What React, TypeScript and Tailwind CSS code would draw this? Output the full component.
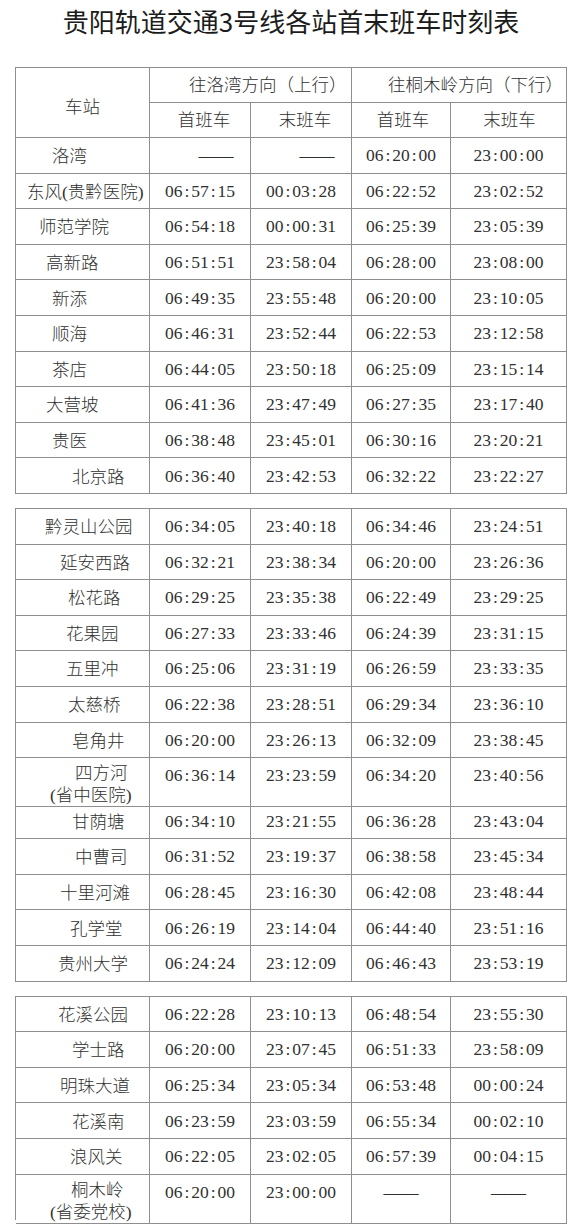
import React from "react";

type Row = {
  name: string;
  sub?: string;
  pl: string;
  subPl?: string;
  t: [string, string, string, string];
};

const g1: Row[] = [
  { name: "洛湾", pl: "pl-[36px]", t: ["——", "——", "06:20:00", "23:00:00"] },
  { name: "东风(贵黔医院)", pl: "pl-[11px]", t: ["06:57:15", "00:03:28", "06:22:52", "23:02:52"] },
  { name: "师范学院", pl: "pl-[23px]", t: ["06:54:18", "00:00:31", "06:25:39", "23:05:39"] },
  { name: "高新路", pl: "pl-[30px]", t: ["06:51:51", "23:58:04", "06:28:00", "23:08:00"] },
  { name: "新添", pl: "pl-[36px]", t: ["06:49:35", "23:55:48", "06:20:00", "23:10:05"] },
  { name: "顺海", pl: "pl-[36px]", t: ["06:46:31", "23:52:44", "06:22:53", "23:12:58"] },
  { name: "茶店", pl: "pl-[36px]", t: ["06:44:05", "23:50:18", "06:25:09", "23:15:14"] },
  { name: "大营坡", pl: "pl-[30px]", t: ["06:41:36", "23:47:49", "06:27:35", "23:17:40"] },
  { name: "贵医", pl: "pl-[36px]", t: ["06:38:48", "23:45:01", "06:30:16", "23:20:21"] },
  { name: "北京路", pl: "pl-[56px]", t: ["06:36:40", "23:42:53", "06:32:22", "23:22:27"] },
];

const g2: Row[] = [
  { name: "黔灵山公园", pl: "pl-[29px]", t: ["06:34:05", "23:40:18", "06:34:46", "23:24:51"] },
  { name: "延安西路", pl: "pl-[44px]", t: ["06:32:21", "23:38:34", "06:20:00", "23:26:36"] },
  { name: "松花路", pl: "pl-[52px]", t: ["06:29:25", "23:35:38", "06:22:49", "23:29:25"] },
  { name: "花果园", pl: "pl-[50px]", t: ["06:27:33", "23:33:46", "06:24:39", "23:31:15"] },
  { name: "五里冲", pl: "pl-[50px]", t: ["06:25:06", "23:31:19", "06:26:59", "23:33:35"] },
  { name: "太慈桥", pl: "pl-[52px]", t: ["06:22:38", "23:28:51", "06:29:34", "23:36:10"] },
  { name: "皂角井", pl: "pl-[56px]", t: ["06:20:00", "23:26:13", "06:32:09", "23:38:45"] },
  { name: "四方河", sub: "(省中医院)", pl: "pl-[59px]", subPl: "pl-[34px]", t: ["06:36:14", "23:23:59", "06:34:20", "23:40:56"] },
  { name: "甘荫塘", pl: "pl-[56px]", t: ["06:34:10", "23:21:55", "06:36:28", "23:43:04"] },
  { name: "中曹司", pl: "pl-[59px]", t: ["06:31:52", "23:19:37", "06:38:58", "23:45:34"] },
  { name: "十里河滩", pl: "pl-[44px]", t: ["06:28:45", "23:16:30", "06:42:08", "23:48:44"] },
  { name: "孔学堂", pl: "pl-[54px]", t: ["06:26:19", "23:14:04", "06:44:40", "23:51:16"] },
  { name: "贵州大学", pl: "pl-[42px]", t: ["06:24:24", "23:12:09", "06:46:43", "23:53:19"] },
];

const g3: Row[] = [
  { name: "花溪公园", pl: "pl-[42px]", t: ["06:22:28", "23:10:13", "06:48:54", "23:55:30"] },
  { name: "学士路", pl: "pl-[56px]", t: ["06:20:00", "23:07:45", "06:51:33", "23:58:09"] },
  { name: "明珠大道", pl: "pl-[44px]", t: ["06:25:34", "23:05:34", "06:53:48", "00:00:24"] },
  { name: "花溪南", pl: "pl-[56px]", t: ["06:23:59", "23:03:59", "06:55:34", "00:02:10"] },
  { name: "浪风关", pl: "pl-[54px]", t: ["06:22:05", "23:02:05", "06:57:39", "00:04:15"] },
  { name: "桐木岭", sub: "(省委党校)", pl: "pl-[55px]", subPl: "pl-[34px]", t: ["06:20:00", "23:00:00", "——", "——"] },
];

const grid = "grid grid-cols-[134px_101px_101px_99px_116px]";
const cell = "border-r border-b border-[#8e8e8e]";

function Time({ v }: { v: string }) {
  if (v === "——") return <span className="tracking-[0px]">——</span>;
  const parts = v.split(":");
  return (
    <span className="whitespace-nowrap">
      {parts.map((p, i) => (
        <React.Fragment key={i}>
          {i > 0 && <span className="inline-block w-[0.5em] text-center">:</span>}
          {p}
        </React.Fragment>
      ))}
    </span>
  );
}

function DataRow({ r, first }: { r: Row; first?: boolean }) {
  const dbl = !!r.sub;
  const h = dbl ? "h-[45.5px]" : "h-[35.6px]";
  return (
    <div className={`${grid} ${h}`}>
      {dbl ? (
        <div className={`${cell} flex flex-col pt-[4px] leading-[22px]`}>
          <span className={r.pl}>{r.name}</span>
          <span className={r.subPl}>{r.sub}</span>
        </div>
      ) : (
        <div className={`${cell} flex items-center pt-[2px] ${r.pl} whitespace-nowrap`}>{r.name}</div>
      )}
      {r.t.map((v, i) => {
        const shift = first && v === "——" ? "pl-[32px]" : "";
        return (
          <div
            key={i}
            className={`${cell} flex justify-center ${dbl ? "items-start pt-[6px] leading-[22px]" : "items-center"} ${shift}`}
          >
            <Time v={v} />
          </div>
        );
      })}
    </div>
  );
}

function Group({ rows, header }: { rows: Row[]; header?: boolean }) {
  return (
    <div className="ml-[15px] w-fit border-l border-t border-[#8e8e8e]">
      {header && (
        <div className={`${grid} grid-rows-[35px_35px]`}>
          <div className={`${cell} row-span-2 flex items-center justify-center pt-[10px]`}>车站</div>
          <div className={`${cell} col-span-2 flex items-center pl-[39px] whitespace-nowrap`}>往洛湾方向（上行）</div>
          <div className={`${cell} col-span-2 flex items-center pl-[36px] whitespace-nowrap`}>往桐木岭方向（下行）</div>
          <div className={`${cell} flex items-center justify-center pl-[8px]`}>首班车</div>
          <div className={`${cell} flex items-center justify-center pl-[8px]`}>末班车</div>
          <div className={`${cell} flex items-center justify-center pl-[4px]`}>首班车</div>
          <div className={`${cell} flex items-center justify-center pl-[2px]`}>末班车</div>
        </div>
      )}
      {rows.map((r, i) => (
        <DataRow key={i} r={r} first={header && i === 0} />
      ))}
    </div>
  );
}

export default function App() {
  return (
    <div className="w-[579px] min-h-[1232px] bg-white">
      <div className="h-[40px] flex items-center justify-center pl-[3px] text-[26px] text-[#1c1c1c] [font-family:'Noto_Sans_CJK_SC',sans-serif] font-normal">
        贵阳轨道交通3号线各站首末班车时刻表
      </div>
      <div className="mt-[27px] flex flex-col gap-[14px] text-[17.5px] text-[#303030] font-light [font-family:'Liberation_Serif','Noto_Sans_CJK_SC',serif]">
        <Group rows={g1} header />
        <Group rows={g2} />
        <Group rows={g3} />
      </div>
    </div>
  );
}
